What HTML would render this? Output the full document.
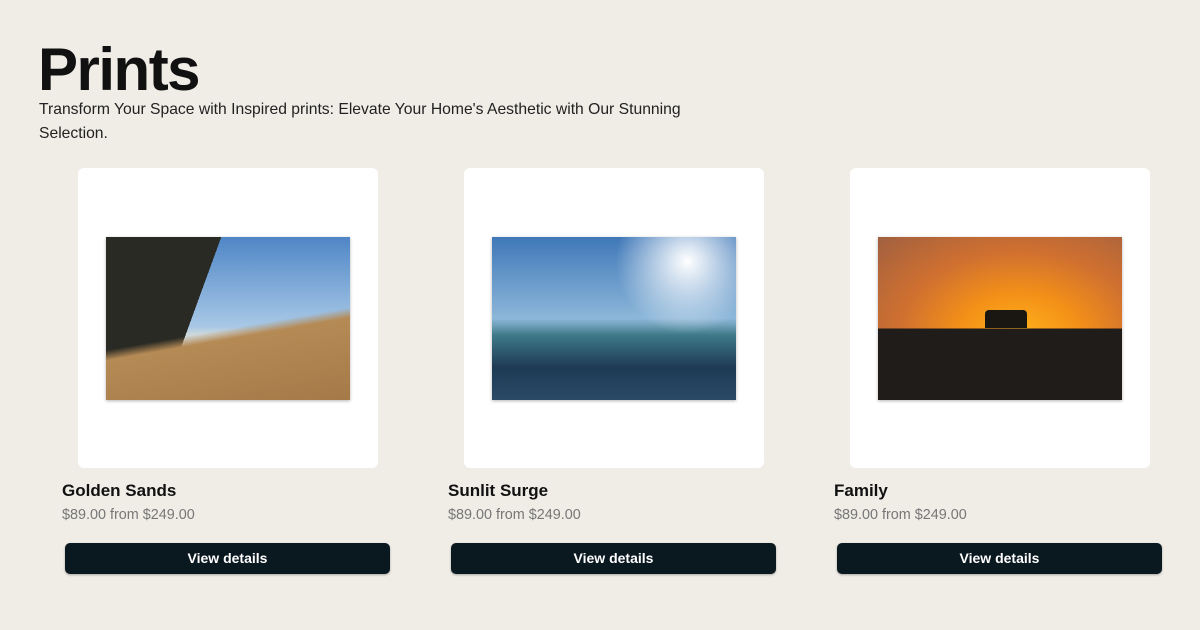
<!DOCTYPE html><html><head><style>
body{margin:0;width:1200px;height:630px;background:#f0ede7;font-family:"Liberation Sans",sans-serif;position:relative;overflow:hidden;color:#111}
h1{position:absolute;left:38px;top:32px;margin:0;font-size:60px;font-weight:bold;letter-spacing:-1.5px;line-height:76px}
.sub{position:absolute;left:39px;top:98px;font-size:15.7px;line-height:24px;color:#222;width:700px}
.card{position:absolute;top:168px;width:300px;height:300px;background:#fff;border-radius:6px}
.img{position:absolute;left:28px;top:69px;width:244px;height:163px;box-shadow:0 1px 3px rgba(0,0,0,.3)}
.t{position:absolute;top:481px;font-size:17px;font-weight:bold}
.p{position:absolute;top:507px;font-size:14.4px;color:#777}
.b{position:absolute;top:543px;width:325px;height:31px;background:#0a1820;border-radius:5px;color:#fff;font-size:14px;font-weight:bold;text-align:center;line-height:31px;box-shadow:0 1px 2px rgba(0,0,0,.3)}
</style></head><body>
<h1>Prints</h1>
<div class="sub">Transform Your Space with Inspired prints: Elevate Your Home's Aesthetic with Our Stunning Selection.</div>

<div class="card" style="left:78px"><div class="img" style="background:linear-gradient(170deg,transparent 0 55%,#b58a55 60%,#a67a48 100%),linear-gradient(110deg,#2a2a24 0 38%,transparent 38%),linear-gradient(180deg,#4f86c6 0,#a8c8e6 55%,#cfd8da 60%)"></div></div>
<div class="t" style="left:62px">Golden Sands</div><div class="p" style="left:62px">$89.00 from $249.00</div><div class="b" style="left:65px">View details</div>

<div class="card" style="left:464px"><div class="img" style="background:radial-gradient(circle at 80% 15%,#fff 0,rgba(255,255,255,.6) 12%,transparent 30%),linear-gradient(180deg,transparent 0 50%,#3f7a8a 60%,#1e3a55 80%,#2a4a66 100%),linear-gradient(180deg,#3f78b8 0,#9cc3e0 60%)"></div></div>
<div class="t" style="left:448px">Sunlit Surge</div><div class="p" style="left:448px">$89.00 from $249.00</div><div class="b" style="left:451px">View details</div>

<div class="card" style="left:850px"><div class="img" style="background:linear-gradient(180deg,transparent 0 56%,#201c1a 56%),radial-gradient(ellipse at 58% 60%,#ffb21a 0,#f39018 30%,#d07030 60%,#a06040 100%)"><div style="position:absolute;left:107px;top:73px;width:42px;height:18px;background:#1a1612;border-radius:4px 4px 0 0"></div></div></div>
<div class="t" style="left:834px">Family</div><div class="p" style="left:834px">$89.00 from $249.00</div><div class="b" style="left:837px">View details</div>
</body></html>
